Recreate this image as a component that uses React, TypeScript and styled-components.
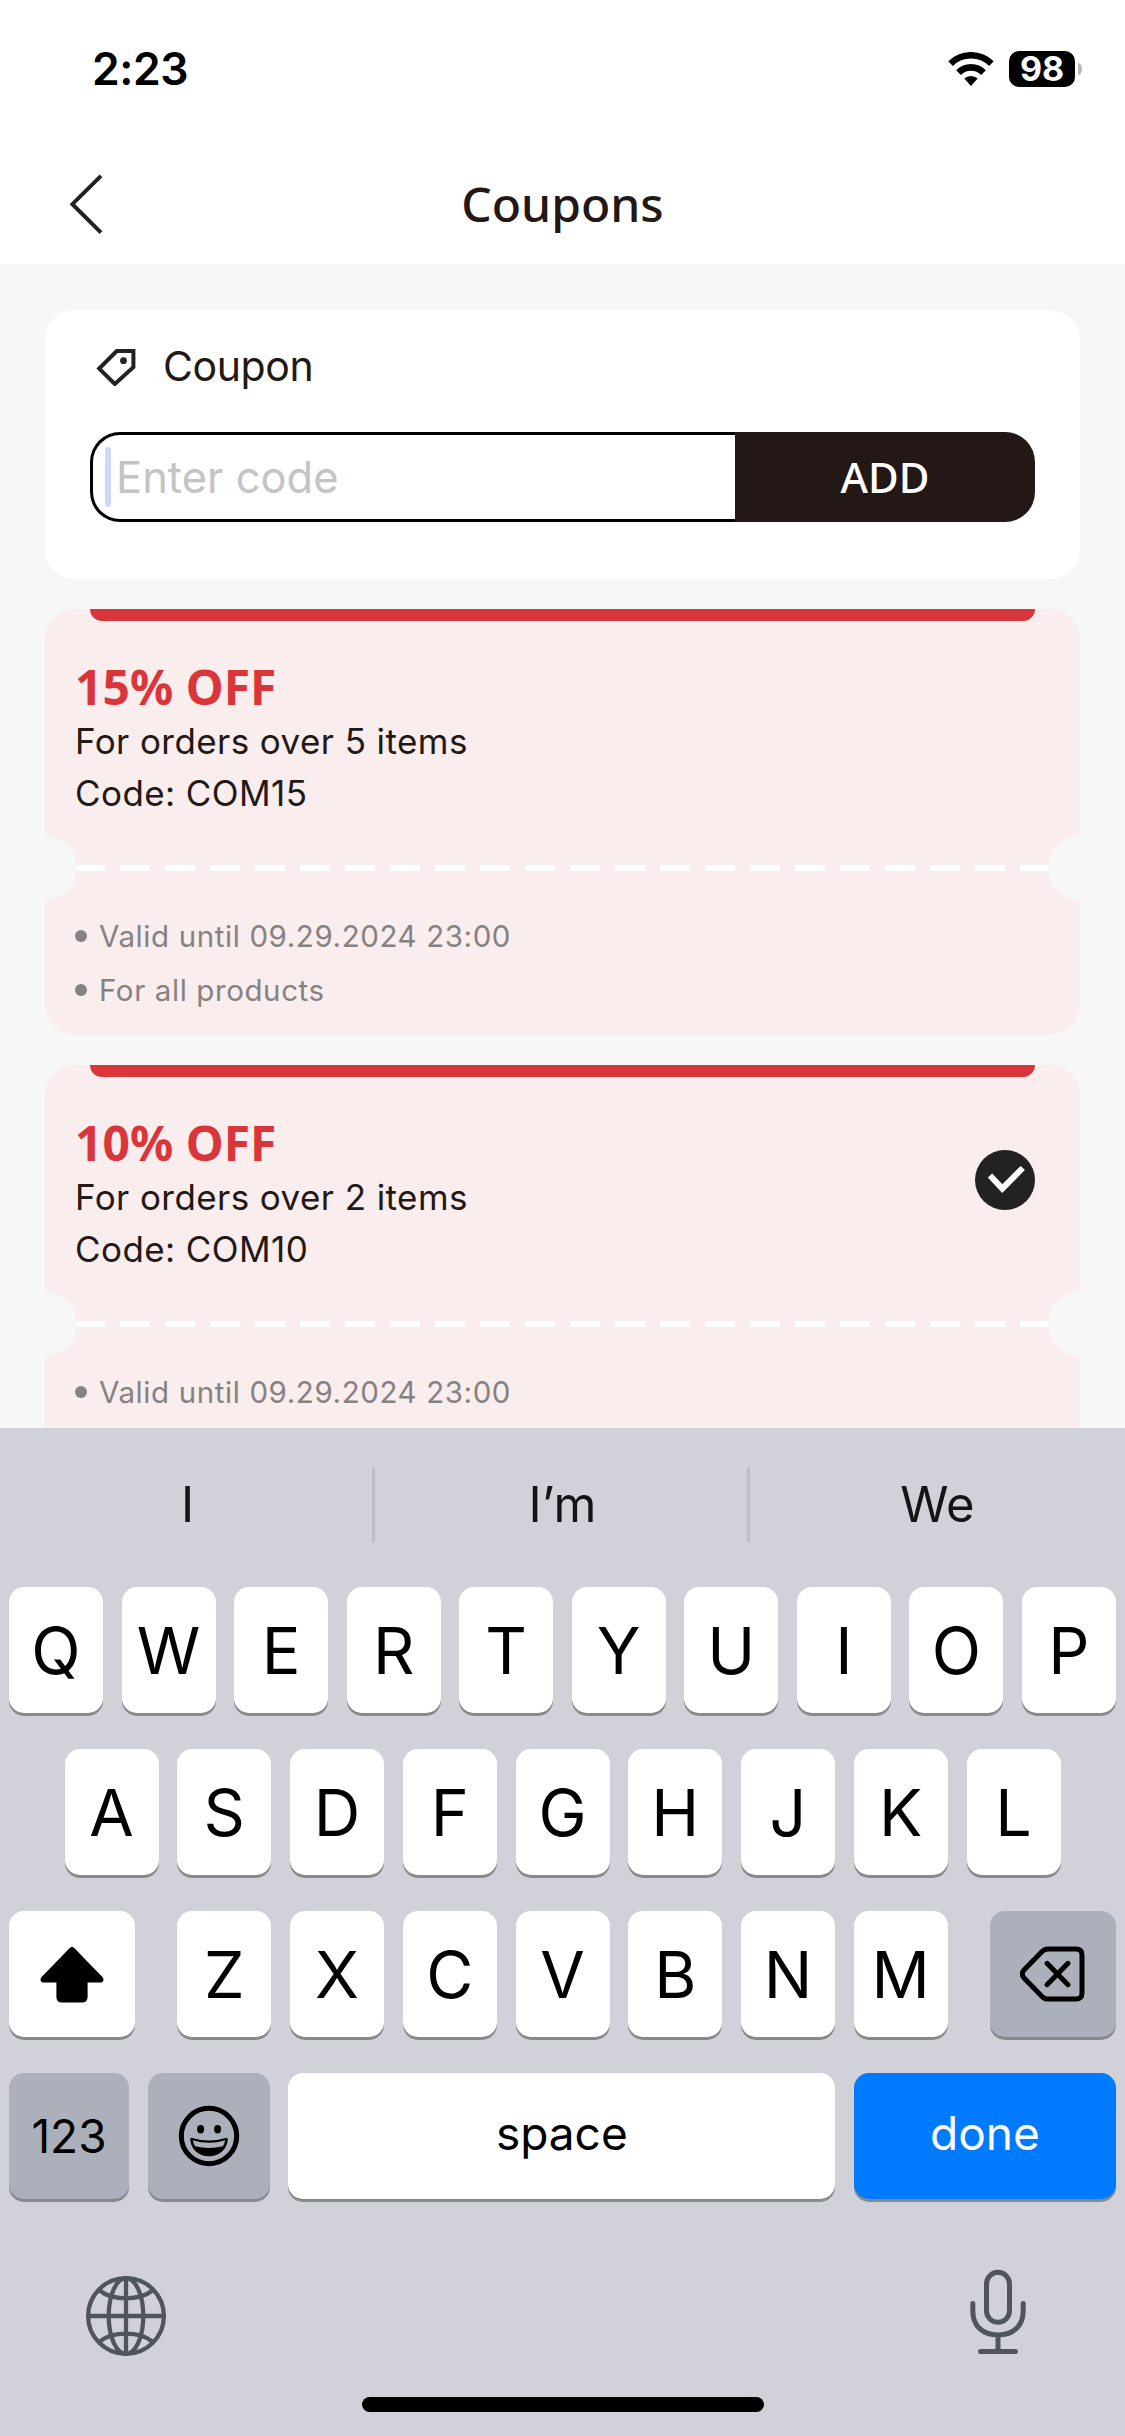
import React from "react";
import styled, { createGlobalStyle } from "styled-components";

const SANS = `Inter, "Liberation Sans", sans-serif`;
const BRAND = `"Noto Sans", "Open Sans", sans-serif`;

const GlobalStyle = createGlobalStyle`
  * { box-sizing: border-box; }
  body { margin: 0; background: #f7f7f7; }
  button { border: 0; padding: 0; font: inherit; color: inherit; }
`;

const Screen = styled.div`
  width: 1125px;
  height: 2436px;
  display: flex;
  flex-direction: column;
  overflow: hidden;
  background: #f7f7f7;
  font-family: ${SANS};
  color: #231815;
`;

const StatusBar = styled.div`
  height: 138px;
  flex: none;
  display: flex;
  justify-content: space-between;
  padding: 0 43px 0 92px;
  background: #fff;
`;

const Clock = styled.time`
  font-size: 44.5px;
  font-weight: 600;
  line-height: 138px;
  letter-spacing: -0.5px;
  color: #000;
`;

const StatusIcons = styled.div`
  display: flex;
  align-items: center;
`;

const WifiSvg = styled.svg`
  width: 46px;
  height: 34px;
  margin-right: 15px;
`;

const BatteryBody = styled.span`
  width: 66px;
  height: 36px;
  border-radius: 10px;
  background: #000;
  color: #fff;
  font-size: 34px;
  font-weight: 700;
  line-height: 36px;
  text-align: center;
`;

const BatteryCap = styled.span`
  width: 4px;
  height: 12px;
  margin-left: 3px;
  border-radius: 0 4px 4px 0 / 0 6px 6px 0;
  background: #b8b8b8;
`;

const NavBar = styled.header`
  height: 126px;
  flex: none;
  display: grid;
  grid-template-columns: 120px 1fr 120px;
  align-items: center;
  padding-bottom: 6px;
  padding-top: 12px;
  background: #fff;
`;

const BackButton = styled.button`
  display: flex;
  padding-left: 68px;
  background: none;
`;

const PageTitle = styled.h1`
  margin: 0;
  text-align: center;
  font: 500 48px/60px ${BRAND};
`;

const Content = styled.main`
  height: 1164px;
  flex: none;
  overflow: hidden;
  display: flex;
  flex-direction: column;
  gap: 30px;
  padding: 46px 45px 0;
`;

const EntryCard = styled.section`
  flex: none;
  height: 269px;
  border-radius: 30px;
  background: #fff;
  padding: 30px 45px 0;
`;

const EntryLabel = styled.div`
  height: 52px;
  display: flex;
  align-items: center;
  padding-left: 6px;
  gap: 27px;
  font-size: 41px;
  line-height: 52px;
  letter-spacing: -0.4px;
`;

const EntryField = styled.div`
  display: flex;
  height: 90px;
  margin-top: 40px;
`;

const CodeInput = styled.div`
  flex: 1;
  display: flex;
  align-items: center;
  border: 3px solid #000;
  border-right: 0;
  border-radius: 30px 0 0 30px;
  padding-left: 12px;
`;

const Caret = styled.span`
  width: 6px;
  height: 60px;
  border-radius: 3px;
  background: #cfd8fa;
`;

const Placeholder = styled.span`
  margin-left: 5px;
  font-size: 43.5px;
  line-height: 60px;
  color: #c4c4c4;
`;

const AddButton = styled.button`
  width: 300px;
  border-radius: 0 30px 30px 0;
  background: #231815;
  color: #fff;
  font: 500 42px/90px ${BRAND};
`;

const Ticket = styled.article`
  flex: none;
  height: 426px;
  border-radius: 30px;
  background: #f9eded;
  display: flex;
  flex-direction: column;
`;

const TicketStripe = styled.div`
  height: 12px;
  margin: 0 45px;
  border-radius: 0 0 12px 12px;
  background: #d9363b;
`;

const TicketBody = styled.div`
  height: 215px;
  display: flex;
  justify-content: space-between;
  align-items: flex-start;
  padding: 36px 45px 0 30px;
`;

const Discount = styled.h2`
  margin: 0;
  padding-top: 1px;
  font: 700 48px/57px ${BRAND};
  color: #d9363b;
`;

const Terms = styled.p`
  margin: 0;
  font-size: 35px;
  line-height: 52px;
  letter-spacing: 0.42px;
`;

const SelectedMark = styled.svg`
  width: 60px;
  height: 60px;
  margin-top: 37px;
`;

const Perforation = styled.div`
  height: 64px;
  flex: none;
  position: relative;
  overflow: hidden;
  display: flex;
  align-items: center;
  padding: 0 30px;

  &::before,
  &::after {
    content: "";
    position: absolute;
    top: 0;
    width: 64px;
    height: 64px;
    border-radius: 50%;
    background: #f7f7f7;
  }
  &::before { left: -32px; }
  &::after { right: -32px; }
`;

const DashLine = styled.div`
  flex: 1;
  height: 6px;
  background: repeating-linear-gradient(90deg, #fff 0 30px, transparent 30px 45px);
`;

const Notes = styled.ul`
  margin: 0;
  padding: 9px 30px 0;
  list-style: none;
`;

const Note = styled.li`
  display: flex;
  align-items: center;
  gap: 12px;
  font-size: 29.5px;
  line-height: 54px;
  letter-spacing: 0.6px;
  color: #868282;

  &::before {
    content: "";
    width: 12px;
    height: 12px;
    border-radius: 50%;
    background: #868282;
  }
`;

const Keyboard = styled.section`
  flex: 1;
  display: flex;
  flex-direction: column;
  background: #d1d2d9;
  color: #000;
`;

const Suggestions = styled.div`
  height: 159px;
  flex: none;
  display: flex;
  align-items: center;
  padding-bottom: 6px;
`;

const Suggestion = styled.span`
  flex: 1;
  text-align: center;
  font-size: 49px;
  line-height: 75px;
  color: #141416;

  &:not(:last-child) {
    box-shadow: inset -3px 0 0 #bebfc5;
  }
`;

const KeyRows = styled.div`
  display: flex;
  flex-direction: column;
  gap: 36px;
`;

const KeyRow = styled.div<{ $inset?: number; $spread?: boolean }>`
  display: flex;
  height: 126px;
  justify-content: space-between;
  padding: 0 ${(p) => p.$inset ?? 9}px;
`;

const KeyGroup = styled.div`
  display: flex;
  gap: 18.75px;
`;

type Tone = "light" | "dark" | "primary";
const toneFill: Record<Tone, string> = { light: "#fff", dark: "#abb0ba", primary: "#007aff" };

const Key = styled.button<{ $width?: number; $tone?: Tone; $size?: number; $drop?: number; $lift?: number }>`
  width: ${(p) => p.$width ?? 94}px;
  flex: none;
  height: 126px;
  display: flex;
  align-items: center;
  justify-content: center;
  padding-top: ${(p) => p.$drop ?? 2}px;
  padding-bottom: ${(p) => p.$lift ?? 0}px;
  border-radius: 15px;
  background: ${(p) => toneFill[p.$tone ?? "light"]};
  color: ${(p) => (p.$tone === "primary" ? "#fff" : "#000")};
  box-shadow: 0 3px 0 #88898d;
  font-size: ${(p) => p.$size ?? 64.5}px;
  line-height: 1;
`;

const SystemBar = styled.div`
  display: flex;
  justify-content: space-between;
  padding: 69px 97px 0 84px;
  height: 198px;
`;

const GlobeSvg = styled.svg`
  width: 84px;
  height: 84px;
  margin-top: 6px;
`;

const MicSvg = styled.svg`
  width: 60px;
  height: 90px;
`;

const HomeIndicator = styled.div`
  width: 402px;
  height: 15px;
  border-radius: 8px;
  background: #000;
  align-self: center;
`;

const WifiIcon = () => (
  <WifiSvg viewBox="0 0 46 34">
    <path d="M23 34 L16.3 26.6 A10 10 0 0 1 29.7 26.6 Z" />
    <path d="M10.500 20.600 A17.500 17.500 0 0 1 35.500 20.600" fill="none" stroke="#000" strokeWidth="6.6" />
    <path d="M2.6 11.6 A29.2 29.2 0 0 1 43.4 11.6" fill="none" stroke="#000" strokeWidth="6.6" />
  </WifiSvg>
);

const BackIcon = () => (
  <svg width="36" height="62" viewBox="0 0 36 62" fill="none" stroke="#222" strokeWidth="4">
    <path d="M33 2.8 L4.4 31.2 L33 59.6" />
  </svg>
);

const TagIcon = () => (
  <svg width="40" height="40" viewBox="0 0 40 40" fill="none">
    <path d="M20.800 5 H37.400 V21.200 L18.800 38 L3.200 22.600 Z" stroke="#222" strokeWidth="4" />
    <circle cx="27.500" cy="14.700" r="3.4" fill="#222" />
  </svg>
);

const ShiftIcon = () => (
  <svg width="64" height="58" viewBox="0 0 64 58">
    <path d="M29.5 2.2 Q32 0 34.5 2.2 L62.4 31 Q64.6 34 62.4 36 Q61.5 36.6 60 36.6 H47.6 V51 Q47.6 56.6 42 56.6 H22 Q16.4 56.6 16.4 51 V36.6 H4 Q2.5 36.6 1.6 36 Q-.6 34 1.6 31 Z" />
  </svg>
);

const BackspaceIcon = () => (
  <svg width="66" height="56" viewBox="0 0 66 56" fill="none" stroke="#000" strokeWidth="5" strokeLinecap="round" strokeLinejoin="round">
    <path d="M28 3 H56 Q62 3 62 9 V47 Q62 53 56 53 H28 Q24.6 53 22 50.4 L4 32 Q0.6 28 4 24 L22 5.600 Q24.600 3 28 3 Z" />
    <path d="M27 17.300 L48 38.700 M48 17.300 L27 38.700" />
  </svg>
);

const SmileyIcon = () => (
  <svg width="62" height="62" viewBox="0 0 62 62">
    <circle cx="31" cy="31" r="27.700" fill="none" stroke="#000" strokeWidth="5" />
    <ellipse cx="22.600" cy="24.300" rx="3.500" ry="4.200" />
    <ellipse cx="39.600" cy="24.300" rx="3.500" ry="4.200" />
    <path d="M12.200 34.500 Q12 32.400 14.300 33 Q31 38 47.700 33 Q50 32.400 49.800 34.500 C49 44.500 41.500 51.200 31 51.200 C20.500 51.200 13 44.500 12.200 34.500 Z" />
    <path d="M14.800 35.200 Q31 40.200 47.200 35.200 Q46.600 38.800 44.800 41.300 Q31 44.700 17.200 41.300 Q15.400 38.800 14.800 35.200 Z" fill="#abb0ba" />
  </svg>
);

const GlobeIcon = () => (
  <GlobeSvg viewBox="0 0 84 84" fill="none" stroke="#50555c" strokeWidth="4.300">
    <circle cx="42" cy="42" r="37.900" />
    <ellipse cx="42" cy="42" rx="17.300" ry="37.900" />
    <path d="M42 4 V80 M4 42 H80 M15 16 Q25 24.300 42 24.300 Q59 24.300 69 16 M15 68 Q25 59.700 42 59.700 Q59 59.700 69 68" />
  </GlobeSvg>
);

const MicIcon = () => (
  <MicSvg viewBox="0 0 60 90" fill="none" stroke="#50555c" strokeWidth="5" strokeLinecap="round">
    <rect x="18.500" y="4.300" width="23" height="50" rx="11.500" />
    <path d="M4.800 35.500 V43 C4.800 58 15 67 30 67 C45 67 55.200 58 55.200 43 V35.500 M30 67 V83.500 M12.500 83.500 H47.500" />
  </MicSvg>
);

interface Coupon {
  discount: string;
  condition: string;
  code: string;
  selected?: boolean;
}

const coupons: Coupon[] = [
  { discount: "15% OFF", condition: "For orders over 5 items", code: "COM15" },
  { discount: "10% OFF", condition: "For orders over 2 items", code: "COM10", selected: true },
];

const CouponTicket = ({ discount, condition, code, selected }: Coupon) => (
  <Ticket>
    <TicketStripe />
    <TicketBody>
      <div>
        <Discount>{discount}</Discount>
        <Terms>{condition}</Terms>
        <Terms>Code: {code}</Terms>
      </div>
      {selected && (
        <SelectedMark viewBox="0 0 60 60">
          <circle cx="30" cy="30" r="30" fill="#222" />
          <path d="M15 25.500 L27.300 38.600 L47.800 18" fill="none" stroke="#fff" strokeWidth="6" />
        </SelectedMark>
      )}
    </TicketBody>
    <Perforation>
      <DashLine />
    </Perforation>
    <Notes>
      <Note>Valid until 09.29.2024 23:00</Note>
      <Note>For all products</Note>
    </Notes>
  </Ticket>
);

const letters = (row: string) => row.split("").map((c) => <Key key={c}>{c}</Key>);

export default function App() {
  return (
    <Screen>
      <GlobalStyle />
      <StatusBar>
        <Clock>2:23</Clock>
        <StatusIcons>
          <WifiIcon />
          <BatteryBody>98</BatteryBody>
          <BatteryCap />
        </StatusIcons>
      </StatusBar>
      <NavBar>
        <BackButton aria-label="Back">
          <BackIcon />
        </BackButton>
        <PageTitle>Coupons</PageTitle>
      </NavBar>
      <Content>
        <EntryCard>
          <EntryLabel>
            <TagIcon />
            Coupon
          </EntryLabel>
          <EntryField>
            <CodeInput>
              <Caret />
              <Placeholder>Enter code</Placeholder>
            </CodeInput>
            <AddButton>ADD</AddButton>
          </EntryField>
        </EntryCard>
        {coupons.map((c) => (
          <CouponTicket key={c.code} {...c} />
        ))}
      </Content>
      <Keyboard>
        <Suggestions>
          <Suggestion>I</Suggestion>
          <Suggestion>I’m</Suggestion>
          <Suggestion>We</Suggestion>
        </Suggestions>
        <KeyRows>
          <KeyRow>{letters("QWERTYUIOP")}</KeyRow>
          <KeyRow $inset={64.5}>{letters("ASDFGHJKL")}</KeyRow>
          <KeyRow>
            <Key $width={126} aria-label="Shift"><ShiftIcon /></Key>
            <KeyGroup>{letters("ZXCVBNM")}</KeyGroup>
            <Key $width={126} $tone="dark" $drop={0} aria-label="Delete"><BackspaceIcon /></Key>
          </KeyRow>
          <KeyRow>
            <Key $width={120} $tone="dark" $size={46} $drop={0}>123</Key>
            <Key $width={122} $tone="dark" $drop={0} aria-label="Emoji"><SmileyIcon /></Key>
            <Key $width={547} $size={46} $drop={0} $lift={7}>space</Key>
            <Key $width={262} $tone="primary" $size={46} $drop={0} $lift={7}>done</Key>
          </KeyRow>
        </KeyRows>
        <SystemBar>
          <GlobeIcon />
          <MicIcon />
        </SystemBar>
        <HomeIndicator />
      </Keyboard>
    </Screen>
  );
}
